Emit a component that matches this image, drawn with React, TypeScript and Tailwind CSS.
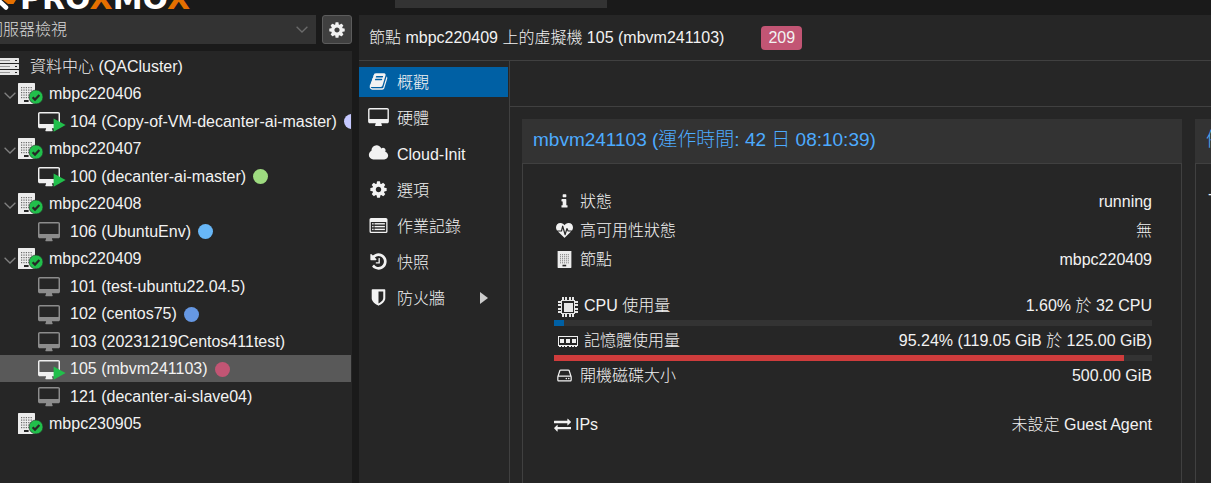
import { useState } from "react";
import type { ReactNode } from "react";

const FONT = "font-['Liberation_Sans','Noto_Sans_CJK_TC',sans-serif] font-light";

const paths = {
  desktop:
    "M1792 992v-832q0-13-9.5-22.5t-22.5-9.5h-1600q-13 0-22.5 9.5t-9.5 22.5v832q0 13 9.5 22.5t22.5 9.5h1600q13 0 22.5-9.5t9.5-22.5zM1920 160v1088q0 66-47 113t-113 47h-544q0 37 16 77.5t32 71 16 43.5q0 26-19 45t-45 19h-512q-26 0-45-19t-19-45q0-14 16-44t32-70 16-78h-544q-66 0-113-47t-47-113v-1088q0-66 47-113t113-47h1600q66 0 113 47t47 113z",
  cloud:
    "M1984 1152q0 159-112.5 271.5t-271.5 112.5h-1088q-185 0-316.5-131.5t-131.5-316.5q0-132 71-241.5t187-163.5q-2-28-2-43 0-212 150-362t362-150q158 0 286.5 88t187.5 230q70-62 166-62 106 0 181 75t75 181q0 75-41 138 129 30 213 134.5t84 239.5z",
  cog:
    "M1152 896q0-106-75-181t-181-75-181 75-75 181 75 181 181 75 181-75 75-181zm512-109v222q0 12-8 23t-20 13l-185 28q-19 54-39 91 35 50 107 138 10 12 10 25t-9 23q-27 37-99 108t-94 71q-12 0-26-9l-138-108q-44 23-91 38-16 136-29 186-7 28-36 28h-222q-14 0-24.5-8.5t-11.5-21.5l-28-184q-49-16-90-37l-141 107q-10 9-25 9-14 0-25-11-126-114-165-168-7-10-7-23 0-12 8-23 15-21 51-66.5t54-70.5q-27-50-41-99l-183-27q-13-2-21-12.5t-8-23.5v-222q0-12 8-23t19-13l186-28q14-46 39-92-40-57-107-138-10-12-10-24 0-10 9-23 26-36 98.5-107.5t94.5-71.5q13 0 26 10l138 107q44-23 91-38 16-136 29-186 7-28 36-28h222q14 0 24.5 8.5t11.5 21.5l28 184q49 16 90 37l142-107q9-9 24-9 13 0 25 10 129 119 165 170 7 8 7 22 0 12-8 23-15 21-51 66.5t-54 70.5q26 50 41 98l183 28q13 2 21 12.5t8 23.5z",
  history:
    "M1664 896q0 156-61 298t-164 245-245 164-298 61q-172 0-327-72.5t-264-204.5q-7-10-6.5-22.5t8.5-20.5l137-138q10-9 25-9 16 2 23 12 73 95 179 147t225 52q104 0 198.5-40.5t163.5-109.5 109.5-163.5 40.5-198.5-40.5-198.5-109.5-163.5-163.5-109.5-198.5-40.5q-98 0-188 35.5t-160 101.5l137 138q31 30 14 69-17 40-59 40h-448q-26 0-45-19t-19-45v-448q0-42 40-59 39-17 69 14l130 129q107-101 244.5-156.5t284.5-55.5q156 0 298 61t245 164 164 245 61 298zm-640-288v448q0 14-9 23t-23 9h-320q-14 0-23-9t-9-23v-64q0-14 9-23t23-9h224v-352q0-14 9-23t23-9h64q14 0 23 9t9 23z",
  shield:
    "M1344 960v-640h-448v1137q119-63 213-137 235-184 235-360zm192-768v768q0 86-33.5 170.5t-83 150-118 127.5-126.5 103-121 77.5-89.5 49.5-42.5 20q-12 6-26 6t-26-6q-16-7-42.5-20t-89.5-49.5-121-77.5-126.5-103-118-127.5-83-150-33.5-170.5v-768q0-26 19-45t45-19h1152q26 0 45 19t19 45z",
  book:
    "M1703 478q40 57 18 129l-275 906q-19 64-76.5 107.5t-122.5 43.5h-923q-77 0-148.5-53.5t-99.5-131.5q-24-67-2-127 0-4 3-27t4-37q1-8-3-21.5t-3-19.5q2-11 8-21t16.5-23.5 16.5-23.5q23-38 45-91.5t30-91.5q3-10 .5-30t-.5-28q3-11 17-28t17-23q21-36 42-92t25-90q1-9-2.5-32t.5-28q4-13 22-30.5t22-22.5q19-26 42.5-84.5t27.5-96.5q1-8-3-25.5t-2-26.5q2-8 9-18t18-23 17-21q8-12 16.5-30.5t15-35 16-36 19.5-32 26.5-23.5 36-11.5 47.5 5.5l-1 3q38-9 51-9h761q74 0 114 56t18 130l-274 906q-36 119-71.5 153.5t-128.5 34.5h-869q-27 0-38 15-11 16-1 43 24 70 144 70h923q29 0 56-15.5t35-41.5l300-987q7-22 5-57 38 15 59 43zm-1064 2q-4 13 2 22.5t20 9.5h608q13 0 25.5-9.5t16.5-22.5l21-64q4-13-2-22.5t-20-9.5h-608q-13 0-25.5 9.5t-16.5 22.5zm-83 256q-4 13 2 22.5t20 9.5h608q13 0 25.5-9.5t16.5-22.5l21-64q4-13-2-22.5t-20-9.5h-608q-13 0-25.5 9.5t-16.5 22.5z",
  info:
    "M1216 1344v128q0 26-19 45t-45 19h-512q-26 0-45-19t-19-45v-128q0-26 19-45t45-19h64v-384h-64q-26 0-45-19t-19-45v-128q0-26 19-45t45-19h384q26 0 45 19t19 45v576h64q26 0 45 19t19 45zm-128-1152v192q0 26-19 45t-45 19h-256q-26 0-45-19t-19-45v-192q0-26 19-45t45-19h256q26 0 45 19t19 45z",
  exchange:
    "M1792 1184v192q0 13-9.5 22.5t-22.5 9.5h-1376v192q0 13-9.5 22.5t-22.5 9.5q-12 0-24-10l-319-320q-9-9-9-22 0-14 9-23l320-320q9-9 23-9 13 0 22.5 9.5t9.5 22.5v192h1376q13 0 22.5 9.5t9.5 22.5zm0-544q0 14-9 23l-320 320q-9 9-23 9-13 0-22.5-9.5t-9.5-22.5v-192h-1376q-13 0-22.5-9.5t-9.5-22.5v-192q0-13 9.5-22.5t22.5-9.5h1376v-192q0-14 9-23t23-9q12 0 24 10l319 319q9 9 9 23z",
  heartbeat:
    "M1280 896h305q-5 6-10 10.5t-9 7.5l-3 4-623 600q-18 18-44 18t-44-18l-624-602q-5-2-21-20h369q22 0 39.5-13.5t22.5-34.5l70-281 190 667q6 20 23 33t39 13q21 0 38-13t23-33l146-485 56 112q18 35 57 35zm512-428q0 145-103 300h-369l-111-221q-8-17-25.5-27t-36.5-8q-45 5-56 46l-129 430-196-686q-6-20-23.5-33t-39.5-13-39 13.5-22 34.5l-116 464h-423q-103-155-103-300 0-220 127-344t351-124q62 0 126.5 21.5t120 58 95.5 68.5 76 68q36-36 76-68t95.5-68.5 120-58 126.5-21.5q224 0 351 124t127 344z",
  hdd:
    "M1168 1216q0 33-23.5 56.5t-56.5 23.5-56.5-23.5-23.5-56.5 23.5-56.5 56.5-23.5 56.5 23.5 23.5 56.5zm256 0q0 33-23.5 56.5t-56.5 23.5-56.5-23.5-23.5-56.5 23.5-56.5 56.5-23.5 56.5 23.5 23.5 56.5zm112 160v-320q0-13-9.5-22.5t-22.5-9.5h-1216q-13 0-22.5 9.5t-9.5 22.5v320q0 13 9.5 22.5t22.5 9.5h1216q13 0 22.5-9.5t9.5-22.5zm-1230-480h1180l-157-482q-4-13-16-21.5t-26-8.5h-782q-14 0-26 8.5t-16 21.5zm1358 160v320q0 66-47 113t-113 47h-1216q-66 0-113-47t-47-113v-320q0-25 16-75l197-606q17-53 63-86t101-33h782q55 0 101 33t63 86l197 606q16 50 16 75z",
};

function Glyph({ d, box, className }: { d: string; box: string; className: string }) {
  return (
    <svg viewBox={box} className={className} fill="currentColor" aria-hidden="true">
      <path d={d} />
    </svg>
  );
}

function BuildingShape() {
  const dots: ReactNode[] = [];
  for (let r = 0; r < 5; r++) {
    for (let c = 0; c < 5; c++) {
      dots.push(<rect key={`${r}-${c}`} x={3 + c * 2.4} y={4 + r * 2.5} width="1.2" height="1.2" fill="#6a6a6a" />);
    }
  }
  return (
    <>
      <rect width="17" height="21" rx="0.6" fill="#ececec" />
      {dots}
      <rect x="6" y="17" width="4.6" height="2" fill="#262626" />
    </>
  );
}

function NodeIcon() {
  return (
    <svg viewBox="0 0 26 22" className="h-[22px] w-[26px] shrink-0" aria-hidden="true">
      <BuildingShape />
      <circle cx="18" cy="14" r="7" fill="#21bf4b" stroke="#262626" strokeWidth="0.6" />
      <path d="M14.6 14.2l2.4 2.4 4.4-4.6" fill="none" stroke="#262626" strokeWidth="2.2" />
    </svg>
  );
}

function VmIcon({ running }: { running?: boolean }) {
  return (
    <svg viewBox="0 0 28 21" className="h-[21px] w-7 shrink-0" aria-hidden="true">
      <g transform="translate(0 1) scale(0.01146 0.0116)" fill={running ? "#efefef" : "#8c8c8c"}>
        <path d={paths.desktop} />
      </g>
      {running && <path d="M15.6 7.4v13.4l12-6.7z" fill="#21bf4b" />}
    </svg>
  );
}

function ServerIcon() {
  return (
    <svg viewBox="0 0 21 17" className="-ml-0.5 h-[17px] w-[21px] shrink-0" aria-hidden="true">
      {[0, 6, 12].map((y) => (
        <g key={y}>
          <rect y={y} width="21" height="5" rx="0.5" fill="#e6e6e6" />
          <rect x="2" y={y + 2} width="10" height="1" fill="#999" />
          <rect x="17" y={y + 2} width="2" height="1" fill="#262626" />
        </g>
      ))}
    </svg>
  );
}

function ListAltIcon() {
  return (
    <svg viewBox="0 0 18 15" className="h-[15px] w-[19px]" fill="currentColor" aria-hidden="true">
      <path
        fillRule="evenodd"
        d="M1.6 0h14.8q1.6 0 1.6 1.6v11.8q0 1.6-1.6 1.6h-14.8q-1.6 0-1.6-1.6v-11.8q0-1.6 1.6-1.6zM1.3 4v9.3q0 .4.4.4h14.6q.4 0 .4-.4v-9.3z"
      />
      {[5.1, 7.9, 10.7].map((y) => (
        <g key={y}>
          <rect x="2.6" y={y} width="1.5" height="1.4" />
          <rect x="5" y={y} width="10.4" height="1.4" />
        </g>
      ))}
    </svg>
  );
}

function CpuIcon() {
  return (
    <svg viewBox="0 0 20 20" className="h-5 w-5" fill="#e6e6e6" aria-hidden="true">
      {[4, 7, 11, 14].map((p) => (
        <g key={p}>
          <rect x={p} y="0" width="2" height="4" />
          <rect x={p} y="16" width="2" height="4" />
          <rect x="0" y={p} width="4" height="2" />
          <rect x="16" y={p} width="4" height="2" />
        </g>
      ))}
      <path fillRule="evenodd" d="M3 3h14v14h-14zM4 4v12h12v-12z" />
      <rect x="6" y="6" width="9" height="9" />
    </svg>
  );
}

function MemoryIcon() {
  return (
    <svg viewBox="0 0 20 12" className="h-3 w-5" fill="#efefef" aria-hidden="true">
      <path fillRule="evenodd" d="M0 0h20v10h-20zM1 1v8h18v-8z" />
      {[2, 8, 14].map((x) => (
        <rect key={x} x={x} y="3" width="4" height="4" />
      ))}
      {[1, 4, 7, 11, 14, 17].map((x) => (
        <rect key={x} x={x} y="9" width="2" height="2" />
      ))}
    </svg>
  );
}

type Vm = { id: string; name: string; running?: boolean; dot?: string; selected?: boolean };
type Host = { name: string; vms: Vm[] };

const hosts: Host[] = [
  { name: "mbpc220406", vms: [{ id: "104", name: "Copy-of-VM-decanter-ai-master", running: true, dot: "bg-[#c5c8ff]" }] },
  { name: "mbpc220407", vms: [{ id: "100", name: "decanter-ai-master", running: true, dot: "bg-[#9edb80]" }] },
  { name: "mbpc220408", vms: [{ id: "106", name: "UbuntuEnv", dot: "bg-[#68b7f7]" }] },
  {
    name: "mbpc220409",
    vms: [
      { id: "101", name: "test-ubuntu22.04.5" },
      { id: "102", name: "centos75", dot: "bg-[#6698e3]" },
      { id: "103", name: "20231219Centos411test" },
      { id: "105", name: "mbvm241103", running: true, dot: "bg-[#c25574]", selected: true },
      { id: "121", name: "decanter-ai-slave04" },
    ],
  },
  { name: "mbpc230905", vms: [] },
];

function Tree() {
  return (
    <ul className="mr-px grid h-[385px] auto-rows-fr overflow-hidden whitespace-nowrap" role="tree" aria-label="資源">
      <li className="flex items-center gap-[11px] pt-0.5 leading-6" role="treeitem">
        <ServerIcon />
        資料中心 (QACluster)
      </li>
      {hosts.flatMap((h) => [
        <li key={h.name} className="flex items-center pt-0.5 leading-6" role="treeitem">
          <span className="flex w-[18px] justify-center pt-0.5 pl-0.5">
            {h.vms.length > 0 && (
              <svg viewBox="0 0 12 7" className="h-[7px] w-3" fill="none" stroke="#808080" strokeWidth="1.3" aria-hidden="true">
                <path d="M.6.8L6 6 11.4.8" />
              </svg>
            )}
          </span>
          <NodeIcon />
          <span className="pl-[5px]">{h.name}</span>
        </li>,
        ...h.vms.map((v) => (
          <li
            key={v.id}
            role="treeitem"
            aria-selected={!!v.selected}
            className={`flex items-center pt-0.5 pl-[38px] leading-6 ${v.selected ? "bg-[#595959]" : ""}`}
          >
            <VmIcon running={v.running} />
            <span className="pl-1">
              {v.id} ({v.name})
            </span>
            {v.dot && <span className={`ml-[7px] size-[15px] shrink-0 rounded-full ${v.dot}`} />}
          </li>
        )),
      ])}
    </ul>
  );
}

const menu: { label: string; icon: ReactNode; sub?: boolean }[] = [
  { label: "概觀", icon: <Glyph d={paths.book} box="0 0 1792 1792" className="size-[19px]" /> },
  { label: "硬體", icon: <Glyph d={paths.desktop} box="0 0 1920 1664" className="h-[18px] w-[21px]" /> },
  { label: "Cloud-Init", icon: <Glyph d={paths.cloud} box="0 0 2048 1792" className="h-[18px] w-[21px]" /> },
  { label: "選項", icon: <Glyph d={paths.cog} box="0 0 1792 1792" className="size-[19px]" /> },
  { label: "作業記錄", icon: <ListAltIcon /> },
  { label: "快照", icon: <Glyph d={paths.history} box="0 0 1792 1792" className="size-[19px]" /> },
  { label: "防火牆", icon: <Glyph d={paths.shield} box="0 0 1792 1792" className="size-[19px]" />, sub: true },
];

function Row({ icon, label, value, wide }: { icon: ReactNode; label: string; value: string; wide?: boolean }) {
  return (
    <div className="flex h-[29px] items-center">
      <span className={`flex shrink-0 ${wide ? "w-[30px] pt-0.5 pl-1" : "w-[26px] pl-0.5"}`}>{icon}</span>
      <span>{label}</span>
      <span className="ml-auto">{value}</span>
    </div>
  );
}

function Bar({ value, color, label }: { value: number; color: string; label: string }) {
  return (
    <div
      className="h-1.5 bg-[#333]"
      role="progressbar"
      aria-label={label}
      aria-valuenow={value}
      aria-valuemin={0}
      aria-valuemax={100}
    >
      <div className={`h-full ${color}`} style={{ width: `${value}%` }} />
    </div>
  );
}

export default function App() {
  const [active, setActive] = useState("概觀");
  return (
    <div className={`flex h-screen flex-col overflow-hidden bg-[#1a1a1a] text-base text-[#f2f2f2] ${FONT}`}>
      <header className="flex h-[15px] shrink-0 items-end">
        <div className="flex h-[15px] w-[395px] items-end overflow-hidden">
          <svg viewBox="0 0 20 15" className="h-[15px] w-5 shrink-0" aria-hidden="true">
            <path d="M3 0l5 4h5.500l2.500-4z" fill="#e57000" />
            <path d="M-4-2L6 7.500" stroke="#fff" strokeWidth="4.500" strokeLinecap="round" />
          </svg>
          <span className="pb-[5px] font-['DejaVu_Sans',sans-serif] text-[30px] leading-[22px] font-bold text-white">
            PRO<span className="text-[#e57000]">X</span>MO<span className="text-[#e57000]">X</span>
          </span>
        </div>
        <input aria-label="搜尋" className="mb-[7px] h-2 w-[212px] bg-[#333] outline-none" />
      </header>

      <div className="flex min-h-0 flex-1 gap-[7px]">
        <aside className="flex w-[352px] shrink-0 flex-col gap-[7px]">
          <div className="flex h-[29px] gap-1.5">
            <div className="flex flex-1 items-center overflow-hidden bg-[#333] pr-2">
              <select
                aria-label="檢視"
                className="-ml-[13px] h-full flex-1 appearance-none bg-transparent text-[#d9d9d9] outline-none"
              >
                <option>伺服器檢視</option>
              </select>
              <svg viewBox="0 0 12 7" className="h-[7px] w-3" fill="none" stroke="#6b6b6b" strokeWidth="1.3" aria-hidden="true">
                <path d="M.6.8L6 6 11.4.8" />
              </svg>
            </div>
            <button
              aria-label="設定"
              className="flex w-[30px] items-center justify-center rounded-[3px] border border-[#5c5c5c] bg-[#404040]"
            >
              <Glyph d={paths.cog} box="0 0 1792 1792" className="size-[18px]" />
            </button>
          </div>
          <div className="flex-1 bg-[#262626] pt-px">
            <Tree />
          </div>
        </aside>

        <main className="flex min-w-0 flex-1 flex-col bg-[#262626]">
          <div className="flex h-[46px] shrink-0 items-center border-b border-[#404040] pl-2.5 whitespace-nowrap">
            <h1>節點 mbpc220409 上的虛擬機 105 (mbvm241103)</h1>
            <span className="ml-[37px] rounded-sm bg-[#c25574] px-[7px]">209</span>
          </div>

          <div className="flex min-h-0 flex-1">
            <nav className="flex w-[151px] shrink-0 flex-col gap-1.5 border-r border-[#404040] pt-1.5 pr-px">
              {menu.map((m) => (
                <button
                  key={m.label}
                  onClick={() => setActive(m.label)}
                  className={`flex h-[30px] items-center text-left ${active === m.label ? "bg-[#0060a4]" : ""}`}
                >
                  <span className="ml-[9px] flex w-[21px] justify-center pb-0.5">{m.icon}</span>
                  <span className="pt-0.5 pl-2">{m.label}</span>
                  {m.sub && (
                    <svg viewBox="0 0 8 12" className="mr-5 ml-auto h-3 w-2" fill="#ccc" aria-hidden="true">
                      <path d="M0 0v12l8-6z" />
                    </svg>
                  )}
                </button>
              ))}
            </nav>

            <div className="flex min-w-0 flex-1 flex-col">
              <div className="h-[46px] shrink-0 border-b border-[#404040]" />
              <div className="flex min-h-0 flex-1 gap-[13px] overflow-hidden pt-3 pl-3">
                <section className="flex min-w-0 flex-1 flex-col">
                  <h2 className="flex h-11 shrink-0 items-center bg-[#333] pb-0.5 pl-[11px] text-[19px] leading-6 text-[#4dabff]">
                    mbvm241103 (運作時間: 42 日 08:10:39)
                  </h2>
                  <div className="flex-1 border border-b-0 border-[#404040] pt-[23px] pr-[29px] pl-[31px]">
                    <Row
                      icon={<Glyph d={paths.info} box="0 0 1792 1792" className="h-[17px] w-[17px]" />}
                      label="狀態"
                      value="running"
                    />
                    <Row
                      icon={<Glyph d={paths.heartbeat} box="0 0 1792 1664" className="h-4 w-[17px]" />}
                      label="高可用性狀態"
                      value="無"
                    />
                    <Row
                      icon={
                        <svg viewBox="-1 0 19 21" className="h-[17px] w-[17px]" aria-hidden="true">
                          <BuildingShape />
                        </svg>
                      }
                      label="節點"
                      value="mbpc220409"
                    />
                    <div className="mt-[17px]">
                      <Row icon={<CpuIcon />} label="CPU 使用量" value="1.60% 於 32 CPU" wide />
                      <Bar value={1.6} color="bg-[#0060a4]" label="CPU 使用量" />
                      <Row icon={<MemoryIcon />} label="記憶體使用量" value="95.24% (119.05 GiB 於 125.00 GiB)" wide />
                      <Bar value={95.24} color="bg-[#cf3c3c]" label="記憶體使用量" />
                      <Row
                        icon={<Glyph d={paths.hdd} box="0 0 1792 1792" className="h-[17px] w-[17px]" />}
                        label="開機磁碟大小"
                        value="500.00 GiB"
                      />
                    </div>
                    <div className="mt-5 flex h-[29px] items-center gap-1">
                      <Glyph d={paths.exchange} box="0 0 1792 1792" className="h-[17px] w-[17px]" />
                      <span>IPs</span>
                      <span className="ml-auto">未設定 Guest Agent</span>
                    </div>
                  </div>
                </section>
                <section className="flex w-4 shrink-0 flex-col overflow-hidden whitespace-nowrap">
                  <h2 className="flex h-11 shrink-0 items-center bg-[#333] pb-0.5 pl-[11px] text-[19px] leading-6 text-[#4dabff]">
                    備註
                  </h2>
                  <div className="flex-1 border border-r-0 border-b-0 border-[#404040] pt-[18px] pl-3">-</div>
                </section>
              </div>
            </div>
          </div>
        </main>
      </div>
    </div>
  );
}
